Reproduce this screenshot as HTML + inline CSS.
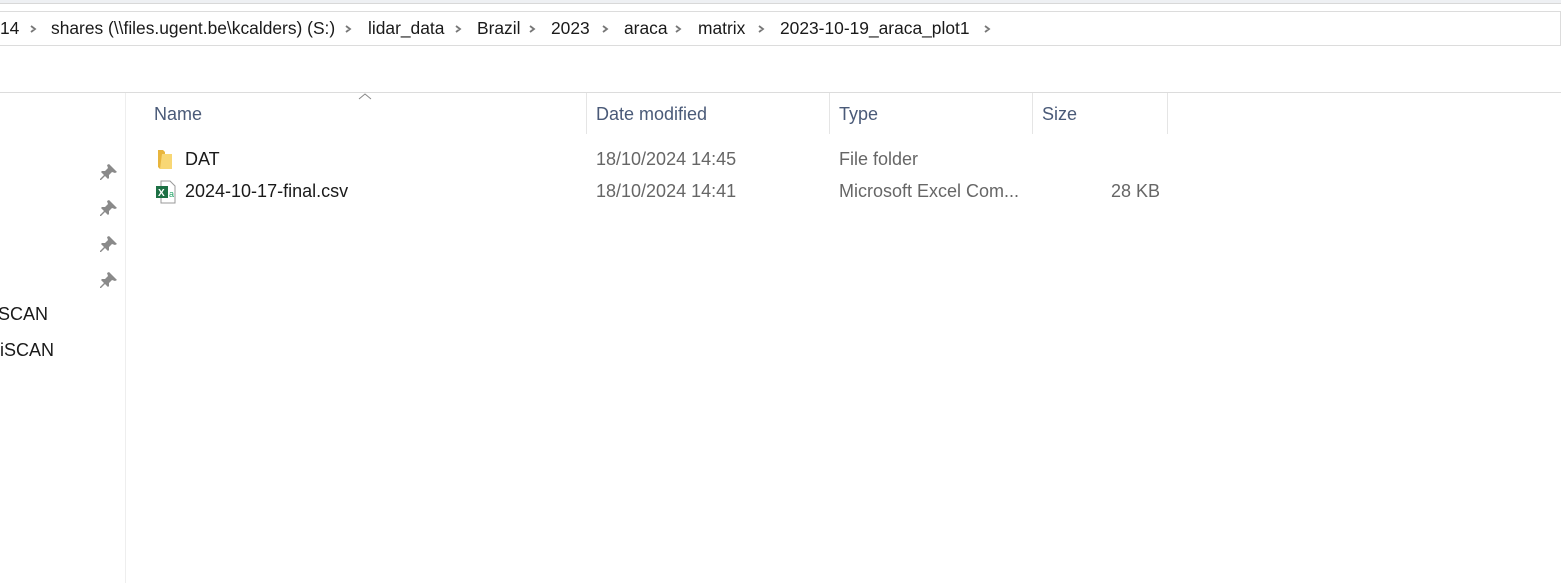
<!DOCTYPE html>
<html><head><meta charset="utf-8"><style>
html,body{margin:0;padding:0;width:1561px;height:583px;overflow:hidden;background:#fff;font-family:"Liberation Sans",sans-serif;}
.a{position:absolute;white-space:nowrap;line-height:21px;}
.hl{position:absolute;height:1px;background:#dcdcdc;}
.vl{position:absolute;width:1px;background:#e5e5e5;}
.bc{font-size:17.4px;color:#1a1a1a;top:18px;}
.hd{font-size:18px;color:#4a5a78;top:104px;}
.r{font-size:18px;top:149px;}
.g{color:#666;}
</style></head><body>
<div class="a" style="left:0;top:0;width:1561px;height:3px;background:#eef0f3"></div>
<div class="hl" style="left:0;top:3px;width:1561px;background:#d8d8d8"></div>
<div class="hl" style="left:0;top:11px;width:1561px"></div>
<div class="hl" style="left:0;top:45px;width:1561px"></div>
<div class="vl" style="left:1560px;top:11px;height:35px;background:#dcdcdc"></div>
<div class="hl" style="left:0;top:92px;width:1561px"></div>

<div class="a bc" style="left:0">14</div>
<div class="a bc" style="left:51px">shares (\\files.ugent.be\kcalders) (S:)</div>
<div class="a bc" style="left:368px">lidar_data</div>
<div class="a bc" style="left:477px">Brazil</div>
<div class="a bc" style="left:551px">2023</div>
<div class="a bc" style="left:624px">araca</div>
<div class="a bc" style="left:698px">matrix</div>
<div class="a bc" style="left:780px">2023-10-19_araca_plot1</div>
<svg class="a" style="left:0;top:19px" width="1000" height="20">
<g fill="none" stroke="#777" stroke-width="1.8">
<path d="M31 7l4 3-4 3M346 7l4 3-4 3M456 7l4 3-4 3M530 7l4 3-4 3M603 7l4 3-4 3M676 7l4 3-4 3M759 7l4 3-4 3M985 7l4 3-4 3"/>
</g></svg>

<div class="vl" style="left:125px;top:93px;height:490px;background:#eeeeee"></div>
<svg class="a" style="left:358px;top:93px" width="14" height="8"><path d="M1 6l6-5 6 5" fill="none" stroke="#888" stroke-width="1"/></svg>
<div class="a hd" style="left:154px">Name</div>
<div class="vl" style="left:586px;top:93px;height:41px"></div>
<div class="a hd" style="left:596px">Date modified</div>
<div class="vl" style="left:829px;top:93px;height:41px"></div>
<div class="a hd" style="left:839px">Type</div>
<div class="vl" style="left:1032px;top:93px;height:41px"></div>
<div class="a hd" style="left:1042px">Size</div>
<div class="vl" style="left:1167px;top:93px;height:41px"></div>

<svg class="a" style="left:157px;top:149px" width="18" height="22"><path d="M1 1h5l2 2v17H3l-2-2z" fill="#e8b53d"/><path d="M5 5h10v15H3z" fill="#f8d775"/></svg>
<div class="a r" style="left:185px;color:#1a1a1a">DAT</div>
<div class="a r g" style="left:596px">18/10/2024 14:45</div>
<div class="a r g" style="left:839px">File folder</div>

<svg class="a" style="left:155px;top:180px" width="22" height="24"><path d="M6 1h9l5 5v17H6z" fill="#fff" stroke="#999"/><rect x="1" y="6" width="12" height="12" fill="#1d7044"/><text x="3" y="16" font-size="10" font-weight="bold" fill="#fff" font-family="Liberation Sans">X</text><text x="14" y="17" font-size="9" fill="#21a366" font-family="Liberation Sans">a</text></svg>
<div class="a r" style="left:185px;top:181px;color:#1a1a1a">2024-10-17-final.csv</div>
<div class="a r g" style="left:596px;top:181px">18/10/2024 14:41</div>
<div class="a r g" style="left:839px;top:181px">Microsoft Excel Com...</div>
<div class="a r g" style="left:1111px;top:181px">28 KB</div>

<svg class="a" style="left:100px;top:162px" width="20" height="130"><g fill="#8a8a8a">
<path id="p" d="M9 2l8 8-2 1-3-1-3 3 0 3-1 1-3-3-4 4-1 0 0-1 4-4-3-3 1-1 3 0 3-3-1-3z"/>
<use href="#p" y="36"/><use href="#p" y="72"/><use href="#p" y="108"/></g></svg>
<div class="a" style="left:-2px;top:304px;font-size:18px;color:#1a1a1a">SCAN</div>
<div class="a" style="left:0;top:340px;font-size:18px;color:#1a1a1a">iSCAN</div>
</body></html>
